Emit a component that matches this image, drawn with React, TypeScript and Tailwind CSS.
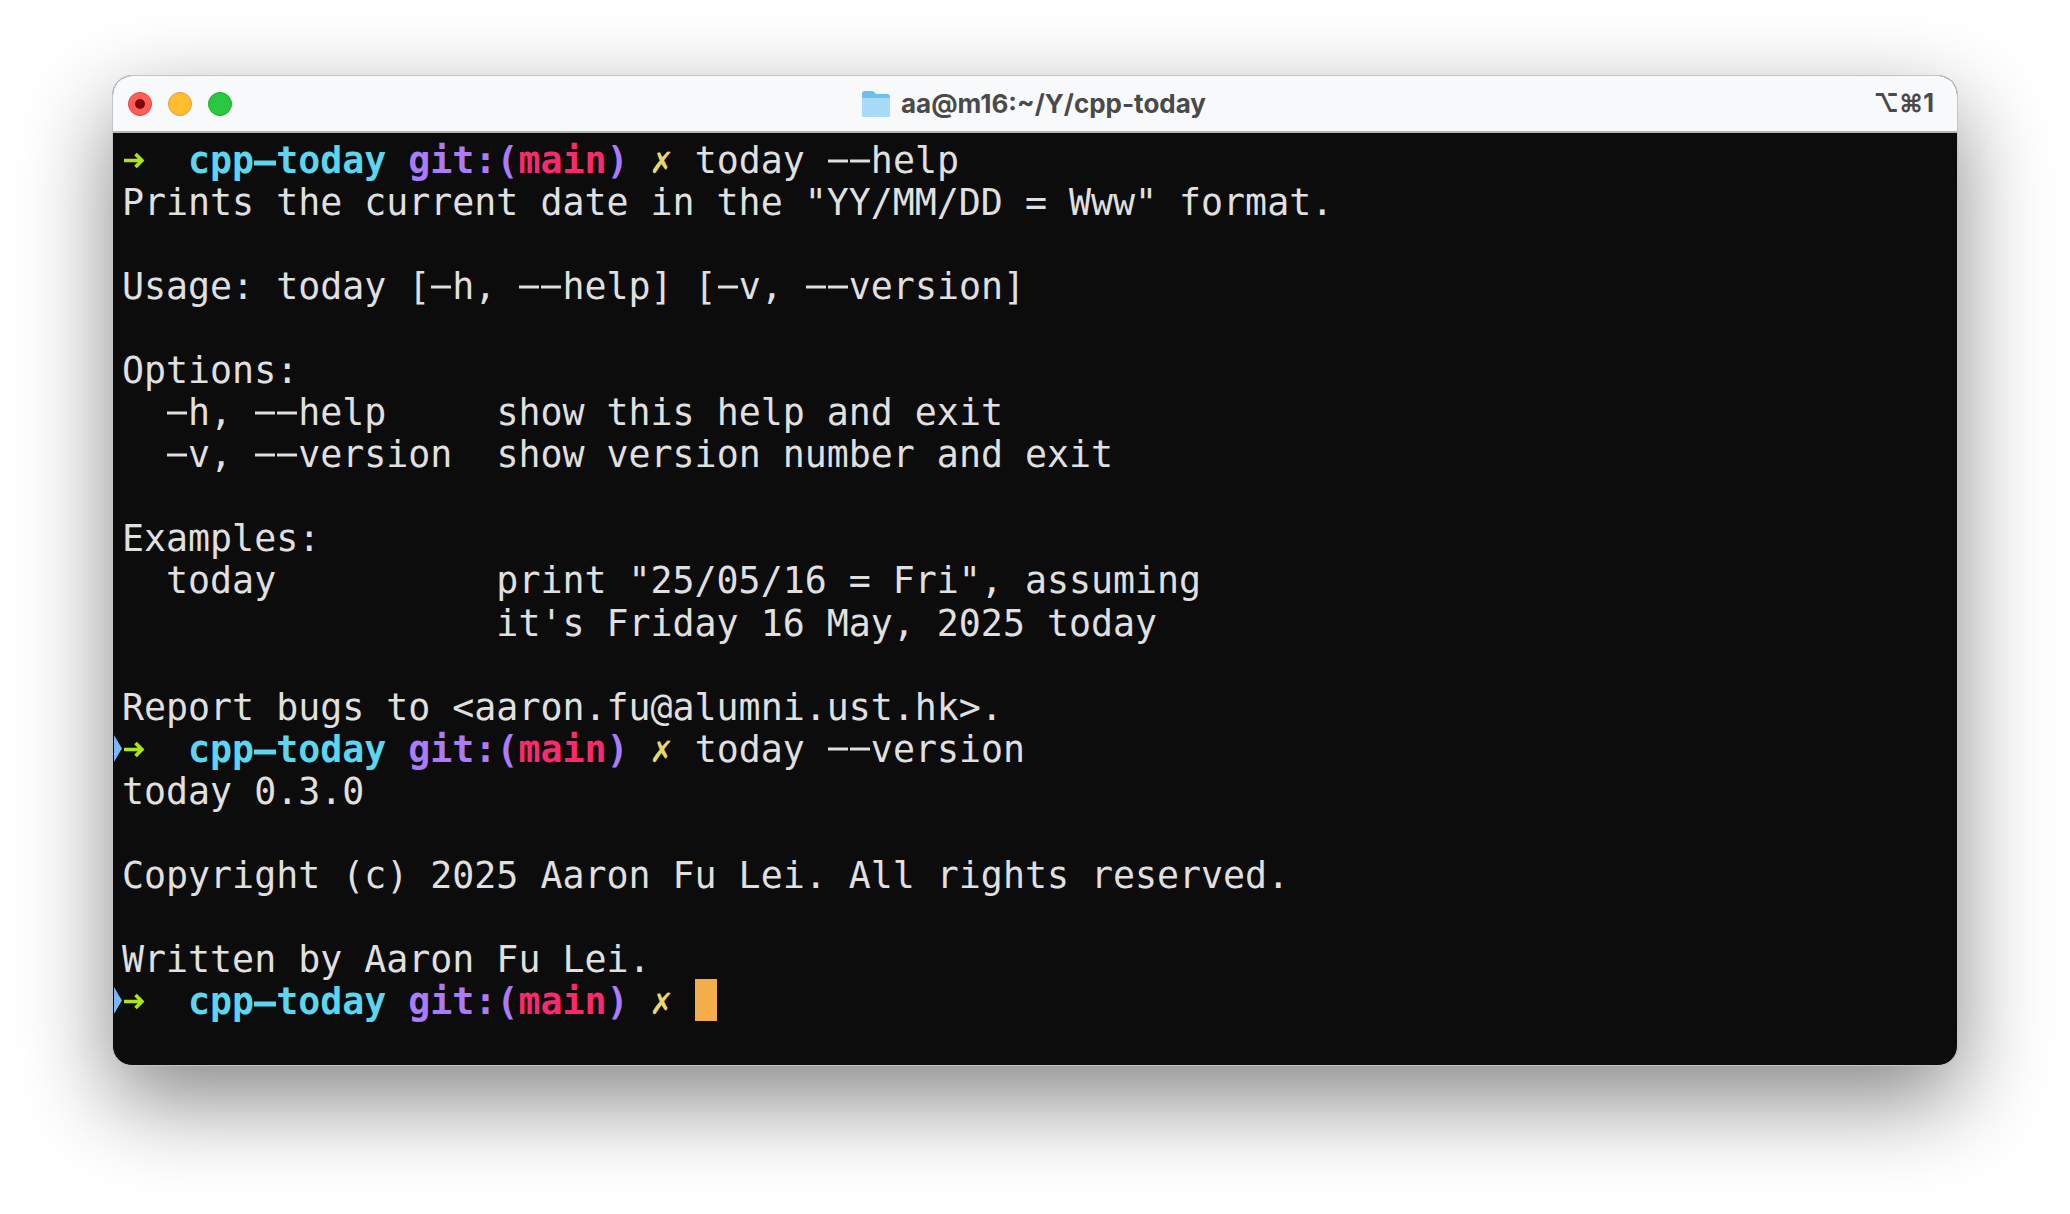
// the terminal font in the shot draws hyphens across the full cell
const Mono = ({ text, bold }: { text: string; bold?: boolean }) => (
  <>
    {text.split(/(-)/).map((part, i) =>
      part === "-" ? (
        <span
          key={i}
          className={
            bold
              ? "relative [-webkit-text-fill-color:transparent] after:absolute after:left-[0px] after:right-[0px] after:top-[56%] after:h-[5px] after:-translate-y-1/2 after:bg-current after:content-['']"
              : "relative [-webkit-text-fill-color:transparent] after:absolute after:left-[1px] after:right-[1px] after:top-1/2 after:h-[3px] after:-translate-y-1/2 after:bg-current after:content-['']"
          }
        >
          -
        </span>
      ) : (
        part
      )
    )}
  </>
);

const Prompt = ({ children, mark }: { children?: React.ReactNode; mark?: boolean }) => (
  <div className="relative h-[42.05px] whitespace-pre">
    {mark && (
      <svg className="absolute left-[-9px] top-[8px]" width="11" height="27" viewBox="0 0 11 27">
        <path d="M0 0 L1 0 L10 13.5 L1 27 L0 27 Z" fill="#000" />
        <path d="M1 0 L9 13.5 L1 27 Z" fill="#78b8ff" />
      </svg>
    )}
    <svg className="inline-block h-[42px] w-[22px] align-top" viewBox="0 0 22 42">
      <path
        d="M2 22.5 H20 M13.5 16 L20 22.5 L13.5 29"
        fill="none"
        stroke="#a8e61a"
        strokeWidth="3.6"
      />
    </svg>
    {"  "}
    <span className="font-bold text-[#5cd5ee]">
      <Mono text="cpp-today" bold />
    </span>{" "}
    <span className="font-bold text-[#ac7bf9]">git:(</span>
    <span className="font-bold text-[#fb2a6d]">main</span>
    <span className="font-bold text-[#ac7bf9]">)</span>{" "}
    <span className="text-[#e6d76e]">✗</span>{" "}
    {children}
  </div>
);

const Line = ({ text = "" }: { text?: string }) => (
  <div className="h-[42.05px] whitespace-pre">
    <Mono text={text} />
  </div>
);

function App() {
  return (
    <div className="min-h-[1214px] bg-white pl-[112px] pr-[112px] pt-[75px]">
      <div className="h-[991px] w-[1846px] overflow-hidden rounded-[20px] border border-[#c4c4c4] bg-[#0c0c0c] shadow-[0_34px_90px_rgba(0,0,0,0.48)]">
        <div className="grid h-[57px] grid-cols-[1fr_auto_1fr] items-center border-b-2 border-[#b5b5b5] bg-[#f8f9fb] px-[15px]">
          <div className="flex gap-[16px]">
            <div className="flex h-[24px] w-[24px] items-center justify-center rounded-full border border-[#e0443e] bg-[#ff5f57]">
              <div className="h-[10px] w-[10px] rounded-full bg-[#7e0508]" />
            </div>
            <div className="h-[24px] w-[24px] rounded-full border border-[#dea034] bg-[#febc2e]" />
            <div className="h-[24px] w-[24px] rounded-full border border-[#1aab29] bg-[#28c840]" />
          </div>
          <div className="flex items-center gap-[10px] pr-[3px] font-['Inter',sans-serif] text-[26px] font-bold text-[#4a4a4a]">
            <svg width="30" height="28" viewBox="0 0 30 28">
              <path d="M1 4 Q1 1 4 1 L11 1 Q13 1 14 3 L15 4 L26 4 Q29 4 29 7 L29 24 Q29 27 26 27 L4 27 Q1 27 1 24 Z" fill="#6cc0ee" />
              <path d="M1 8 L29 8 L29 24 Q29 27 26 27 L4 27 Q1 27 1 24 Z" fill="#a8dbf8" />
            </svg>
            <span>aa@m16:~/Y/cpp-today</span>
          </div>
          <span className="justify-self-end pr-[8px] font-['Inter',sans-serif] text-[25px] font-bold text-[#4a4a4a]">⌥⌘1</span>
        </div>
        <div className="pl-[9px] pt-[5px] font-['DejaVu_Sans_Mono',monospace] text-[36.6px] leading-[45px] text-[#e0e0e0]">
          <Prompt>
            <Mono text="today --help" />
          </Prompt>
          <Line text={'Prints the current date in the "YY/MM/DD = Www" format.'} />
          <Line />
          <Line text="Usage: today [-h, --help] [-v, --version]" />
          <Line />
          <Line text="Options:" />
          <Line text="  -h, --help     show this help and exit" />
          <Line text="  -v, --version  show version number and exit" />
          <Line />
          <Line text="Examples:" />
          <Line text={'  today          print "25/05/16 = Fri", assuming'} />
          <Line text="                 it's Friday 16 May, 2025 today" />
          <Line />
          <Line text="Report bugs to <aaron.fu@alumni.ust.hk>." />
          <Prompt mark>
            <Mono text="today --version" />
          </Prompt>
          <Line text="today 0.3.0" />
          <Line />
          <Line text="Copyright (c) 2025 Aaron Fu Lei. All rights reserved." />
          <Line />
          <Line text="Written by Aaron Fu Lei." />
          <Prompt mark>
            <span className="inline-block h-[42px] w-[22px] bg-[#f3ae4b] align-top" />
          </Prompt>
        </div>
      </div>
    </div>
  );
}

export default App;
